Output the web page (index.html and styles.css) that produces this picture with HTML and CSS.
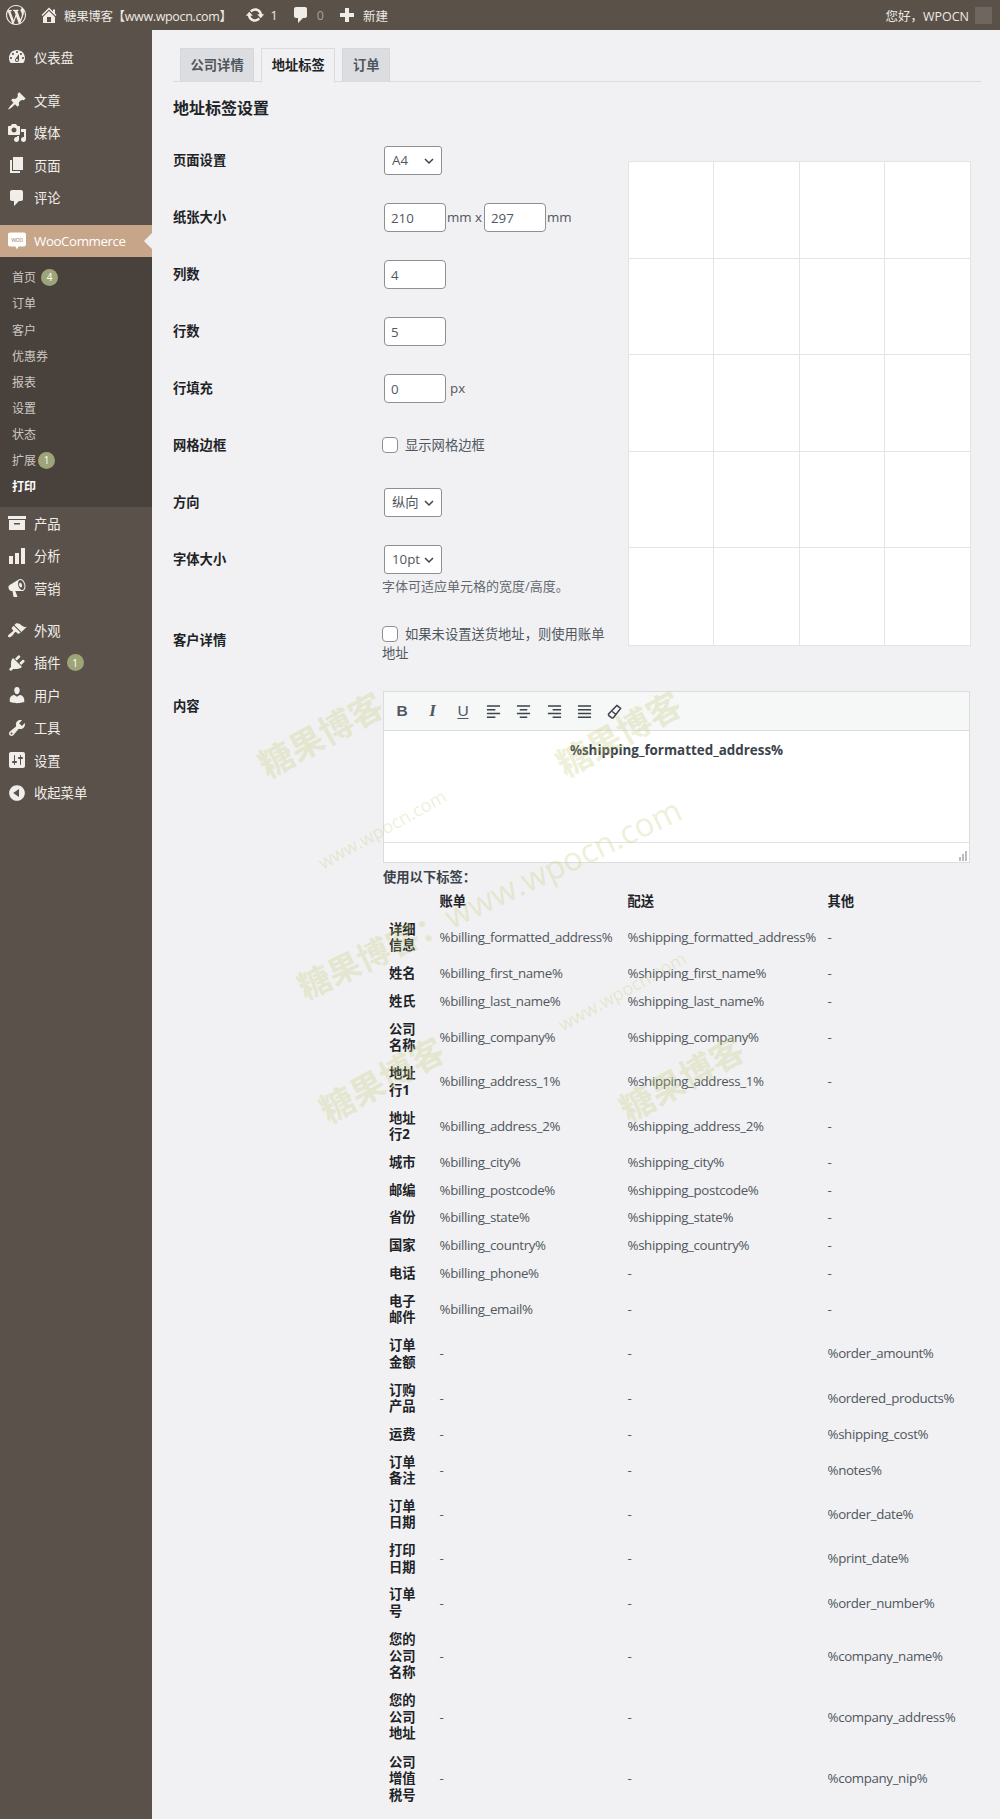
FILE: index.html
```html
<!DOCTYPE html>
<html lang="zh-CN">
<head>
<meta charset="utf-8">
<title>地址标签设置</title>
<link rel="stylesheet" href="styles.css">
</head>
<body>
<header class="adminbar">
  <div class="bar-left">
    <svg class="bar-logo" viewBox="0 0 20 20"><path d="M20 10c0-5.51-4.49-10-10-10C4.48 0 0 4.49 0 10c0 5.52 4.48 10 10 10 5.51 0 10-4.48 10-10zM7.78 15.37L4.37 6.22c.55-.02 1.17-.08 1.17-.08.5-.06.44-1.13-.06-1.11 0 0-1.45.11-2.37.11-.18 0-.37 0-.58-.01C4.12 2.69 6.87 1.11 10 1.11c2.33 0 4.45.87 6.05 2.34-.68-.11-1.65.39-1.65 1.58 0 .74.45 1.36.9 2.1.35.61.55 1.36.55 2.46 0 1.49-1.4 5-1.4 5l-3.03-8.37c.54-.02.82-.17.82-.17.5-.05.44-1.25-.06-1.22 0 0-1.44.12-2.38.12-.87 0-2.33-.12-2.33-.12-.5-.03-.56 1.2-.06 1.22l.92.08 1.26 3.41zM17.41 10c.24-.64.74-1.87.43-4.25.7 1.29 1.05 2.71 1.05 4.25 0 3.29-1.73 6.24-4.4 7.78.97-2.59 1.94-5.2 2.92-7.78zM6.1 18.09C3.12 16.65 1.11 13.53 1.11 10c0-1.3.23-2.48.72-3.59C3.25 10.3 4.67 14.2 6.1 18.09zm4.03-6.63l2.58 6.98c-.86.29-1.76.45-2.71.45-.79 0-1.57-.11-2.29-.33.81-2.38 1.62-4.74 2.42-7.1z"/></svg>
    <svg class="bar-icon home" viewBox="0 0 20 20"><path d="M16 8.5l1.53 1.53-1.06 1.06L10 4.62l-6.47 6.47-1.06-1.06L10 2.5l4 4v-2h2v4zm-6-2.46l6 5.99V18H4v-5.97zM12 17v-5H8v5h4z"/></svg>
    <span class="bar-title">糖果博客【www.wpocn.com】</span>
    <svg class="bar-icon update" viewBox="0 0 20 20"><path d="M10.2 3.28c3.53 0 6.43 2.61 6.92 6h2.08l-3.5 4-3.5-4h2.32c-.45-1.97-2.21-3.45-4.32-3.45-1.45 0-2.73.71-3.54 1.78L4.95 5.66C6.23 4.2 8.11 3.28 10.2 3.28zm-.4 13.44c-3.52 0-6.43-2.61-6.92-6H.8l3.5-4c1.17 1.33 2.33 2.67 3.5 4H5.48c.45 1.97 2.21 3.45 4.32 3.45 1.45 0 2.73-.71 3.54-1.78l1.71 1.95c-1.28 1.46-3.15 2.38-5.25 2.38z"/></svg>
    <span class="bar-count">1</span>
    <svg class="bar-icon comment" viewBox="0 0 20 20"><path d="M5 2h9c1.1 0 2 .9 2 2v7c0 1.1-.9 2-2 2h-2l-5 5v-5H5c-1.1 0-2-.9-2-2V4c0-1.1.9-2 2-2z"/></svg>
    <span class="bar-count dim">0</span>
    <svg class="bar-icon plus" viewBox="0 0 20 20"><path d="M17 8v4h-5v5H8v-5H3V8h5V3h4v5h5z"/></svg>
    <span class="bar-new">新建</span>
  </div>
  <div class="bar-right"><span>您好，WPOCN</span><i class="avatar"></i></div>
</header>

<div class="layout">
  <nav class="sidebar">
    <a class="menu-item first"><svg viewBox="0 0 20 20"><path d="M3.76 16h12.48c1.1-1.37 1.76-3.11 1.76-5 0-4.42-3.58-8-8-8s-8 3.58-8 8c0 1.89.66 3.63 1.76 5zM10 4c.55 0 1 .45 1 1s-.45 1-1 1-1-.45-1-1 .45-1 1-1zM6 6c.55 0 1 .45 1 1s-.45 1-1 1-1-.45-1-1 .45-1 1-1zm8 0c.55 0 1 .45 1 1s-.45 1-1 1-1-.45-1-1 .45-1 1-1zm-5.37 5.55L12 7v6c0 1.1-.9 2-2 2s-2-.9-2-2c0-.57.24-1.08.63-1.45zM4 10c.55 0 1 .45 1 1s-.45 1-1 1-1-.45-1-1 .45-1 1-1zm12 0c.55 0 1 .45 1 1s-.45 1-1 1-1-.45-1-1 .45-1 1-1zm-5 3c0-.55-.45-1-1-1s-1 .45-1 1 .45 1 1 1 1-.45 1-1z" fill-rule="evenodd"/></svg>仪表盘</a>
    <div class="sep-a"></div>
    <a class="menu-item"><svg viewBox="0 0 20 20"><path d="M10.44 3.02l1.82-1.82 6.36 6.35-1.83 1.82c-1.05-.68-2.48-.57-3.41.36l-.75.75c-.92.93-1.04 2.35-.35 3.41l-1.83 1.82-2.41-2.41-2.8 2.79c-.42.42-3.38 2.71-3.8 2.29s1.86-3.39 2.28-3.81l2.79-2.79L4.1 9.36l1.83-1.82c1.05.69 2.48.57 3.4-.36l.75-.75c.93-.92 1.05-2.35.36-3.41z"/></svg>文章</a>
    <a class="menu-item"><svg viewBox="0 0 20 20"><path d="M13 11V4c0-.55-.45-1-1-1h-1.67L9 1H5L3.67 3H2c-.55 0-1 .45-1 1v7c0 .55.45 1 1 1h10c.55 0 1-.45 1-1zM7 4.5c1.38 0 2.5 1.12 2.5 2.5S8.38 9.5 7 9.5 4.5 8.38 4.5 7 5.62 4.5 7 4.5zM14 6h5v10.5c0 1.38-1.12 2.5-2.5 2.5S14 17.88 14 16.5s1.12-2.5 2.5-2.5c.17 0 .34.02.5.05V9h-3V6zm-4 8.05V13h2v3.5c0 1.38-1.12 2.5-2.5 2.5S7 17.88 7 16.5 8.12 14 9.5 14c.17 0 .34.02.5.05z"/></svg>媒体</a>
    <a class="menu-item"><svg viewBox="0 0 20 20"><path d="M6 15V2h10v13H6zm-1 1h8v2H3V5h2v11z"/></svg>页面</a>
    <a class="menu-item"><svg viewBox="0 0 20 20"><path d="M5 2h9c1.1 0 2 .9 2 2v7c0 1.1-.9 2-2 2h-2l-5 5v-5H5c-1.1 0-2-.9-2-2V4c0-1.1.9-2 2-2z"/></svg>评论</a>
    <div class="sep-a"></div>
    <a class="menu-item active"><svg viewBox="0 0 20 20"><path d="M3 1.5h14c1.1 0 2 .9 2 2v10c0 1.1-.9 2-2 2h-5.5l-1.5 3-1.5-3H3c-1.1 0-2-.9-2-2v-10c0-1.1.9-2 2-2z"/><text x="10" y="10.6" class="woo-mark">woo</text></svg>WooCommerce</a>
    <div class="submenu">
      <a>首页<b class="badge">4</b></a>
      <a>订单</a>
      <a>客户</a>
      <a>优惠券</a>
      <a>报表</a>
      <a>设置</a>
      <a>状态</a>
      <a>扩展<b class="badge tight">1</b></a>
      <a class="current">打印</a>
    </div>
    <a class="menu-item"><svg viewBox="0 0 20 20"><path fill-rule="evenodd" d="M19 3v3H1V3h18zM2 7h16v10H2V7zm11 3H7v1.5h6V10z"/></svg>产品</a>
    <a class="menu-item"><svg viewBox="0 0 20 20"><path d="M18 18V2h-4v16h4zm-6 0V7H8v11h4zm-6 0v-8H2v8h4z"/></svg>分析</a>
    <a class="menu-item"><svg viewBox="0 0 20 20"><path fill-rule="evenodd" d="M18.15 5.94c.46 1.62.38 3.22-.02 4.48-.42 1.28-1.26 2.18-2.3 2.48-.16.06-.26.06-.4.06-.06.02-.12.02-.18.02-.06.02-.14.02-.22.02h-6.8l2.22 5.5c.02.14-.06.26-.14.34-.08.1-.24.16-.34.16H6.95c-.1 0-.26-.06-.34-.16-.08-.08-.16-.2-.14-.34l-1-5.5H4.25l-.02-.02c-.5.06-1.08-.18-1.54-.62s-.88-1.08-1.06-1.88c-.24-.8-.2-1.56-.02-2.2.18-.62.58-1.08 1.06-1.3l.02-.02 9-5.4c.1-.06.18-.1.24-.16.06-.04.14-.08.24-.12.16-.08.28-.12.5-.18 1.04-.3 2.24.1 3.22.98s1.76 2.24 2.26 3.86zm-2.58 5.98h-.02c.4-.1.74-.34 1.04-.7.58-.7.86-1.76.86-3.04 0-.64-.1-1.3-.28-1.98-.34-1.36-1.02-2.5-1.78-3.24s-1.68-1.1-2.46-.88c-.82.22-1.4.96-1.7 2-.32 1.04-.28 2.36.06 3.72.38 1.36 1 2.5 1.8 3.24.78.74 1.62 1.1 2.48.88zm-2.54-7.08c.22-.04.42-.02.62.04.38.16.76.48 1.02 1s.42 1.2.42 1.78c0 .3-.04.56-.12.8-.18.48-.44.84-.86.94-.34.1-.8-.06-1.14-.4s-.64-.86-.78-1.5c-.18-.62-.12-1.24.02-1.72s.48-.84.82-.94z"/></svg>营销</a>
    <div class="sep-b"></div>
    <a class="menu-item"><svg viewBox="0 0 20 20"><path d="M14.48 11.06L7.41 3.99l1.5-1.5c.5-.56 2.3-.47 3.51.32 1.21.8 1.43 1.28 2.91 2.1 1.18.64 2.45 1.26 4.45.85zm-.71.71L6.7 4.7 4.93 6.47c-.39.39-.39 1.02 0 1.41l1.06 1.06c.39.39.39 1.03 0 1.42-.6.6-1.43 1.11-2.21 1.69-.35.26-.7.53-1.01.84C1.43 13.23.4 14.94 1.4 15.94c.99 1 2.7-.03 4.04-1.37.31-.31.58-.66.85-1.02.57-.78 1.08-1.61 1.69-2.21.39-.39 1.02-.39 1.41 0l1.06 1.06c.39.39 1.02.39 1.41 0z"/></svg>外观</a>
    <a class="menu-item"><svg viewBox="0 0 20 20"><path d="M13.11 4.36L9.87 7.6 8 5.73l3.24-3.24c.35-.34 1.05-.2 1.56.32.52.51.66 1.21.31 1.55zm-8 1.77l.91-1.12 9.01 9.01-1.19.84c-.71.71-2.63 1.16-3.82 1.16H6.14L4.9 17.26c-.59.59-1.54.59-2.12 0-.59-.58-.59-1.53 0-2.12l1.24-1.24v-3.88c0-1.13.4-3.19 1.09-3.89zm7.26 3.97l3.24-3.24c.34-.35 1.04-.21 1.55.31.52.51.66 1.21.31 1.55l-3.24 3.25z"/></svg>插件<b class="badge">1</b></a>
    <a class="menu-item"><svg viewBox="0 0 20 20"><path d="M10 9.25c-2.27 0-2.73-3.44-2.73-3.44C7 4.02 7.82 2 9.97 2c2.16 0 2.98 2.02 2.71 3.81 0 0-.41 3.44-2.68 3.44zm0 2.57L12.72 10c2.39 0 4.52 2.33 4.52 4.53v2.49s-3.65 1.13-7.24 1.13c-3.65 0-7.24-1.13-7.24-1.13v-2.49c0-2.25 1.94-4.48 4.47-4.48z"/></svg>用户</a>
    <a class="menu-item"><svg viewBox="0 0 20 20"><path fill-rule="evenodd" d="M16.68 9.77c-1.34 1.34-3.3 1.67-4.95.99l-5.41 6.52c-.99.99-2.59.99-3.58 0s-.99-2.59 0-3.57l6.52-5.42c-.68-1.65-.35-3.61.99-4.95 1.28-1.28 3.12-1.62 4.72-1.06l-2.89 2.89 2.82 2.82 2.86-2.87c.53 1.58.18 3.39-1.08 4.65zM3.81 16.21c.4.39 1.04.39 1.43 0 .4-.4.4-1.04 0-1.43-.39-.4-1.03-.4-1.43 0-.39.39-.39 1.03 0 1.43z"/></svg>工具</a>
    <a class="menu-item"><svg viewBox="0 0 20 20"><path fill-rule="evenodd" d="M18 16V4c0-1.1-.9-2-2-2H4c-1.1 0-2 .9-2 2v12c0 1.1.9 2 2 2h12c1.1 0 2-.9 2-2zM8 11h1c.55 0 1 .45 1 1s-.45 1-1 1H8v1.5c0 .28-.22.5-.5.5s-.5-.22-.5-.5V13H6c-.55 0-1-.45-1-1s.45-1 1-1h1V5.5c0-.28.22-.5.5-.5s.5.22.5.5V11zm5-2h-1c-.55 0-1-.45-1-1s.45-1 1-1h1V5.5c0-.28.22-.5.5-.5s.5.22.5.5V7h1c.55 0 1 .45 1 1s-.45 1-1 1h-1v5.5c0 .28-.22.5-.5.5s-.5-.22-.5-.5V9z"/></svg>设置</a>
    <a class="menu-item"><svg viewBox="0 0 20 20"><path fill-rule="evenodd" d="M10 2.16c4.33 0 7.84 3.51 7.84 7.84s-3.51 7.84-7.84 7.84S2.16 14.33 2.16 10 5.71 2.16 10 2.16zm2 11.72V6.12L6.18 9.97z"/></svg>收起菜单</a>
  </nav>

  <main class="content">
    <div class="tabs">
      <a class="tab">公司详情</a>
      <a class="tab active">地址标签</a>
      <a class="tab">订单</a>
    </div>
    <h2 class="page-title">地址标签设置</h2>

    <section class="settings">
      <div class="form">
        <div class="row"><label>页面设置</label><div class="field"><span class="select">A4<svg viewBox="0 0 12 12"><path d="M2 4l4 4 4-4"/></svg></span></div></div>
        <div class="row"><label>纸张大小</label><div class="field"><input class="num" value="210"><span class="unit">mm x</span><input class="num" value="297"><span class="unit">mm</span></div></div>
        <div class="row"><label>列数</label><div class="field"><input class="num" value="4"></div></div>
        <div class="row"><label>行数</label><div class="field"><input class="num" value="5"></div></div>
        <div class="row"><label>行填充</label><div class="field"><input class="num" value="0"><span class="unit px">px</span></div></div>
        <div class="row"><label>网格边框</label><div class="field"><i class="check"></i><span class="check-label">显示网格边框</span></div></div>
        <div class="row"><label>方向</label><div class="field"><span class="select">纵向<svg viewBox="0 0 12 12"><path d="M2 4l4 4 4-4"/></svg></span></div></div>
        <div class="row tall"><label>字体大小</label><div class="field stack"><span class="select">10pt<svg viewBox="0 0 12 12"><path d="M2 4l4 4 4-4"/></svg></span><p class="desc">字体可适应单元格的宽度/高度。</p></div></div>
        <div class="row wrapcheck"><label>客户详情</label><div class="field block"><i class="check"></i><span class="check-label">如果未设置送货地址，则使用账单地址</span></div></div>
      </div>
      <div class="preview">
        <i></i><i></i><i></i><i></i><i></i><i></i><i></i><i></i><i></i><i></i>
        <i></i><i></i><i></i><i></i><i></i><i></i><i></i><i></i><i></i><i></i>
      </div>
    </section>

    <section class="content-row">
      <label>内容</label>
      <div class="content-body">
        <div class="editor">
          <div class="toolbar">
            <span class="tb"><span class="tb-b">B</span></span>
            <span class="tb"><span class="tb-i">I</span></span>
            <span class="tb"><span class="tb-u">U</span></span>
            <span class="tb"><svg viewBox="0 0 16 16"><path d="M1 2h14M1 6h9M1 10h14M1 14h9"/></svg></span>
            <span class="tb"><svg viewBox="0 0 16 16"><path d="M1 2h14M4 6h8M1 10h14M4 14h8"/></svg></span>
            <span class="tb"><svg viewBox="0 0 16 16"><path d="M1 2h14M6 6h9M1 10h14M6 14h9"/></svg></span>
            <span class="tb"><svg viewBox="0 0 16 16"><path d="M1 2h14M1 6h14M1 10h14M1 14h14"/></svg></span>
            <span class="tb"><svg class="eraser" viewBox="0 0 16 16"><path d="M10.5 1.5l4 3.2-7.5 9.6c-.6.7-1.5.8-2.2.3l-2.6-2c-.7-.6-.8-1.5-.3-2.2zM5.6 8l4 3.2"/></svg></span>
          </div>
          <div class="editor-area"><strong>%shipping_formatted_address%</strong></div>
          <div class="statusbar"><svg viewBox="0 0 10 10"><path d="M9 0v10M6 3v7M3 6v4"/></svg></div>
        </div>
        <p class="tags-title">使用以下标签：</p>
        <table class="tags">
          <colgroup><col class="c1"><col class="c2"><col class="c3"><col class="c4"></colgroup>
          <thead><tr><th></th><th>账单</th><th>配送</th><th>其他</th></tr></thead>
          <tbody>
            <tr><th>详细信息</th><td>%billing_formatted_address%</td><td>%shipping_formatted_address%</td><td>-</td></tr>
            <tr><th>姓名</th><td>%billing_first_name%</td><td>%shipping_first_name%</td><td>-</td></tr>
            <tr><th>姓氏</th><td>%billing_last_name%</td><td>%shipping_last_name%</td><td>-</td></tr>
            <tr><th>公司名称</th><td>%billing_company%</td><td>%shipping_company%</td><td>-</td></tr>
            <tr><th>地址行1</th><td>%billing_address_1%</td><td>%shipping_address_1%</td><td>-</td></tr>
            <tr><th>地址行2</th><td>%billing_address_2%</td><td>%shipping_address_2%</td><td>-</td></tr>
            <tr><th>城市</th><td>%billing_city%</td><td>%shipping_city%</td><td>-</td></tr>
            <tr><th>邮编</th><td>%billing_postcode%</td><td>%shipping_postcode%</td><td>-</td></tr>
            <tr><th>省份</th><td>%billing_state%</td><td>%shipping_state%</td><td>-</td></tr>
            <tr><th>国家</th><td>%billing_country%</td><td>%shipping_country%</td><td>-</td></tr>
            <tr><th>电话</th><td>%billing_phone%</td><td>-</td><td>-</td></tr>
            <tr><th>电子邮件</th><td>%billing_email%</td><td>-</td><td>-</td></tr>
            <tr><th>订单金额</th><td>-</td><td>-</td><td>%order_amount%</td></tr>
            <tr><th>订购产品</th><td>-</td><td>-</td><td>%ordered_products%</td></tr>
            <tr><th>运费</th><td>-</td><td>-</td><td>%shipping_cost%</td></tr>
            <tr><th>订单备注</th><td>-</td><td>-</td><td>%notes%</td></tr>
            <tr><th>订单日期</th><td>-</td><td>-</td><td>%order_date%</td></tr>
            <tr><th>打印日期</th><td>-</td><td>-</td><td>%print_date%</td></tr>
            <tr><th>订单号</th><td>-</td><td>-</td><td>%order_number%</td></tr>
            <tr class="three"><th>您的公司名称</th><td>-</td><td>-</td><td>%company_name%</td></tr>
            <tr class="three"><th>您的公司地址</th><td>-</td><td>-</td><td>%company_address%</td></tr>
            <tr class="three"><th>公司增值税号</th><td>-</td><td>-</td><td>%company_nip%</td></tr>
          </tbody>
        </table>
      </div>
    </section>
  </main>
</div>

<div class="watermarks">
  <span class="wm cn w1">糖果博客</span>
  <span class="wm cn w2">糖果博客</span>
  <span class="wm url w3">www.wpocn.com</span>
  <span class="wm long w4"><b>糖果博客：</b>www.wpocn.com</span>
  <span class="wm url w5">www.wpocn.com</span>
  <span class="wm cn w6">糖果博客</span>
  <span class="wm cn w7">糖果博客</span>
</div>
</body>
</html>
```
FILE: styles.css
```css
* { box-sizing: border-box; }
html, body { margin: 0; padding: 0; }
body {
  width: 1000px;
  height: 1819px;
  overflow: hidden;
  position: relative;
  background: #f1f1f3;
  color: #50575e;
  font-family: "Open Sans", "Noto Sans CJK SC", sans-serif;
  font-size: 13.3px;
}

/* admin bar */
.adminbar {
  height: 30px;
  background: #5a5149;
  color: #eee9e4;
  display: flex;
  justify-content: space-between;
  align-items: center;
  font-size: 12.5px;
}
.bar-left, .bar-right { display: flex; align-items: center; }
.adminbar svg { fill: #f0ede9; flex: none; }
.bar-logo { width: 20px; height: 20px; margin-left: 6px; }
.bar-icon { width: 20px; height: 20px; }
.home { margin-left: 13px; }
.bar-title { margin-left: 5px; white-space: nowrap; letter-spacing: -.35px; }
.update { margin-left: 13px; }
.bar-count { margin-left: 6px; }
.bar-count.dim { color: #a9a29b; }
.comment { margin-left: 13px; }
.plus { margin-left: 13px; }
.bar-new { margin-left: 6px; }
.bar-right { padding-right: 8px; }
.avatar { width: 17px; height: 17px; background: #6e665f; margin-left: 6px; }

/* layout */
.layout { display: flex; height: 1789px; }
.sidebar {
  width: 152px;
  flex: none;
  background: #5b514b;
  padding-top: 11px;
  color: #f1eeea;
}
.menu-item {
  display: flex;
  align-items: center;
  height: 32.4px;
  padding-left: 7px;
  font-size: 13.3px;
}
.menu-item svg { width: 20px; height: 20px; fill: #f1eeea; margin-right: 7px; flex: none; }
.sep-a { height: 11px; }
.sep-b { height: 10px; }
.menu-item.active { background: #c7a589; color: #fff; position: relative; letter-spacing: -.4px; }
.menu-item.active svg { fill: #fff; }
.menu-item.active::after {
  content: "";
  position: absolute;
  right: 0;
  top: 50%;
  margin-top: -8px;
  border: 8px solid transparent;
  border-right-color: #f1f1f3;
  border-left-width: 0;
}
.menu-item.active svg .woo-mark { fill: #b08d70; font-size: 6.5px; font-family: "Open Sans", sans-serif; text-anchor: middle; }
.submenu { background: #48413c; padding: 7px 0 8px; }
.submenu a {
  display: flex;
  align-items: center;
  height: 26.1px;
  padding-left: 12px;
  font-size: 12px;
  color: #cdc8c3;
}
.submenu a.current { color: #fff; font-weight: 700; }
.badge {
  width: 17px;
  height: 17px;
  border-radius: 50%;
  background: #9da477;
  color: #fff;
  font-size: 10px;
  font-weight: 400;
  display: inline-flex;
  align-items: center;
  justify-content: center;
  margin-left: 5px;
}
.badge.tight { margin-left: 2px; }
.menu-item .badge { margin-left: 6px; }

/* main */
.content { flex: 1; padding: 18px 19px 0 21px; min-width: 0; }
.tabs {
  display: flex;
  gap: 7px;
  padding-left: 7px;
  height: 34px;
  border-bottom: 1px solid #dcdcde;
}
.tab {
  height: 34px;
  padding: 0 9.5px;
  line-height: 32px;
  background: #dcdde0;
  border: 1px solid #d6d7da;
  border-bottom: 0;
  font-weight: 700;
  color: #50575e;
  font-size: 13.3px;
}
.tab.active { background: #f1f1f3; color: #1d2327; border-color: #dcdcde; height: 35px; }
.page-title {
  margin: 14px 0 0;
  height: 25px;
  line-height: 25px;
  font-size: 16px;
  font-weight: 700;
  color: #1d2327;
}

/* settings form */
.settings { display: flex; gap: 22px; margin-top: 11px; align-items: flex-start; }
.form { width: 433px; flex: none; }
.row { display: flex; height: 57px; padding-top: 14px; }
.row label {
  width: 211px;
  flex: none;
  line-height: 29px;
  font-weight: 700;
  color: #1d2327;
}
.content-row > label {
  width: 210px;
  flex: none;
  padding-top: 1px;
  line-height: 29px;
  font-weight: 700;
  color: #1d2327;
}
.field { display: flex; align-items: flex-start; flex: 1; min-width: 0; }
.field.stack { flex-direction: column; }
.field.block { display: block; line-height: 18.5px; margin-left: -2px; }
.row.tall { height: 80px; }
.row.wrapcheck { height: 66px; }
.row.wrapcheck label { padding-top: 1px; }
.num {
  width: 62px;
  height: 29px;
  border: 1px solid #8c8f94;
  border-radius: 4px;
  background: #fff;
  padding: 0 6px;
  margin: 0;
  font: inherit;
  color: #50575e;
  outline: none;
  flex: none;
}
.unit { line-height: 29px; margin: 0 1px; width: 36px; flex: none; white-space: nowrap; }
.unit:last-child { width: auto; }
.unit.px { margin-left: 4px; }
.select {
  width: 58px;
  height: 29px;
  border: 1px solid #8c8f94;
  border-radius: 3px;
  background: #fff;
  padding: 0 7px;
  line-height: 27px;
  color: #50575e;
  position: relative;
  display: block;
  flex: none;
}
.select svg {
  position: absolute;
  right: 6px;
  top: 8px;
  width: 12px;
  height: 12px;
  fill: none;
  stroke: #3c434a;
  stroke-width: 1.5;
}
.desc { margin: 3px 0 0 -2px; line-height: 18px; color: #646970; white-space: nowrap; font-size: 13px; }
.check {
  display: inline-block;
  width: 16px;
  height: 16px;
  border: 1px solid #8c8f94;
  border-radius: 4px;
  background: #fff;
  vertical-align: -3px;
  flex: none;
  margin: 6px 0 0 -2px;
}
.field.block .check { margin: 0; }
.check-label { margin-left: 7px; line-height: 29px; }
.field.block .check-label { line-height: 18.5px; }
.preview {
  width: 343px;
  height: 485px;
  margin-top: 29px;
  display: grid;
  grid-template-columns: repeat(4, 1fr);
  grid-template-rows: repeat(5, 1fr);
  background: #fff;
  border: 1px solid #e4e4e7;
}
.preview i { border-right: 1px solid #e4e4e7; border-bottom: 1px solid #e4e4e7; }
.preview i:nth-child(4n) { border-right: 0; }
.preview i:nth-last-child(-n+4) { border-bottom: 0; }

/* content */
.content-row { display: flex; margin-top: 14px; }
.content-body { flex: 1; min-width: 0; padding-right: 11px; }
.editor { border: 1px solid #dcdcde; background: #fff; }
.toolbar {
  height: 39px;
  background: #f6f7f7;
  border-bottom: 1px solid #dcdcde;
  display: flex;
  align-items: center;
  padding-left: 3px;
}
.tb { width: 30.4px; display: flex; justify-content: center; align-items: center; color: #3c434a; flex: none; }
.tb svg { width: 15px; height: 15px; fill: none; stroke: #3c434a; stroke-width: 1.6; }
.tb-b, .tb-i, .tb-u { font-family: "Liberation Sans", sans-serif; font-size: 15.5px; line-height: 20px; }
.tb-b { font-weight: 700; color: #50575e; }
.tb-i { font-style: italic; font-weight: 700; font-family: "Liberation Serif", serif; font-size: 17px; color: #50575e; }
.tb-u { text-decoration: underline; text-underline-offset: 2px; color: #50575e; }
.editor-area {
  height: 111px;
  padding-top: 9px;
  text-align: center;
  line-height: 20px;
  color: #3c434a;
  font-size: 13.4px;
}
.editor-area strong { font-weight: 700; }
.statusbar { height: 20px; border-top: 1px solid #e2e2e4; position: relative; }
.statusbar svg {
  position: absolute;
  right: 2px;
  bottom: 1px;
  width: 10px;
  height: 10px;
  fill: none;
  stroke: #8c8f94;
  stroke-width: 1.2;
}
.tags-title { margin: 5px 0 0; line-height: 18px; font-weight: 700; color: #3c434a; }
.tags { border-collapse: collapse; table-layout: fixed; width: 587px; margin-top: 1px; }
.c1 { width: 56.5px; }
.c2 { width: 188px; }
.c3 { width: 200px; }
.c4 { width: 142.5px; }
.tags th, .tags td {
  padding: 5.7px 0;
  line-height: 16.45px;
  text-align: left;
  white-space: nowrap;
  letter-spacing: -.36px;
}
.tags th { font-weight: 700; color: #1d2327; letter-spacing: 0; }
.tags thead th { padding-bottom: 6.2px; }
.tags tbody th { white-space: normal; padding-left: 6px; padding-right: 12px; }
.tags tbody td { color: #50575e; }
.tags tr.three th { padding-top: 6px; padding-bottom: 6px; }

/* watermarks */
.watermarks { position: absolute; inset: 0; pointer-events: none; overflow: hidden; }
.wm {
  position: absolute;
  width: 0;
  height: 0;
  display: flex;
  align-items: center;
  justify-content: center;
  white-space: nowrap;
  color: rgba(196, 204, 120, .3);
  transform: rotate(-29deg);
}
.wm.cn { font-size: 34px; font-weight: 700; }
.wm.url { font-size: 18px; font-weight: 400; }
.wm.long { font-size: 32.5px; font-weight: 400; transform: rotate(-25.5deg); }
.wm.long b { font-weight: 700; }
.w1 { left: 320px; top: 733px; }
.w2 { left: 618px; top: 732px; }
.w3 { left: 382px; top: 829px; }
.w4 { left: 489px; top: 897px; }
.w5 { left: 622px; top: 991px; }
.w6 { left: 381px; top: 1078px; }
.w7 { left: 681px; top: 1077px; }
```
